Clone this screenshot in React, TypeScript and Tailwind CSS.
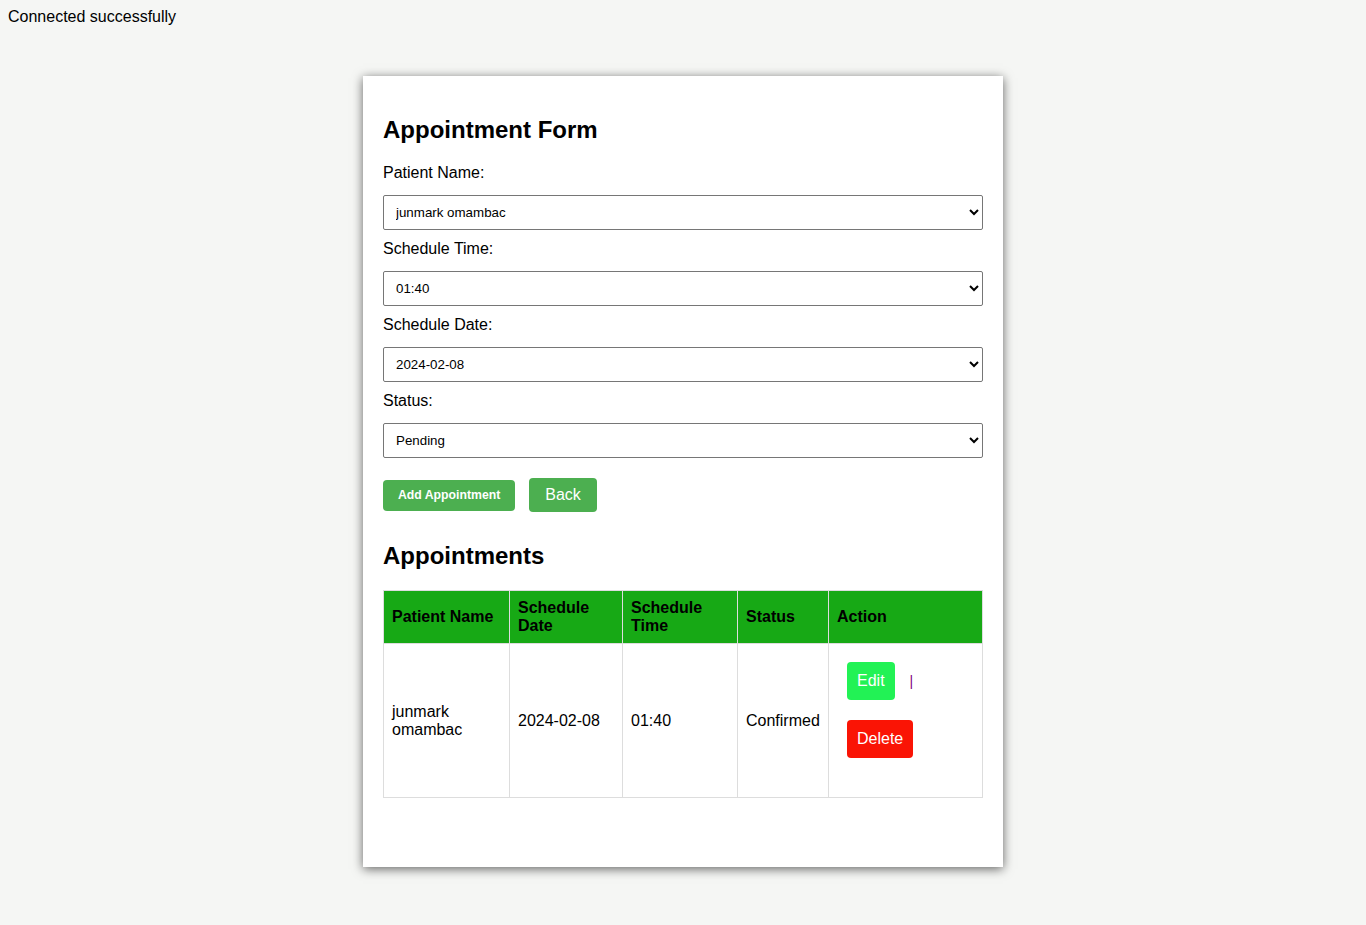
import React from "react"

const fields = [
  { label: "Patient Name:", value: "junmark omambac" },
  { label: "Schedule Time:", value: "01:40" },
  { label: "Schedule Date:", value: "2024-02-08" },
  { label: "Status:", value: "Pending" },
]

export default function App() {
  return (
    <div className="min-h-[925px] bg-[#f5f6f4] pt-[8px] font-['Liberation_Sans',Arial,sans-serif] text-black">
      <div className="pl-[8px] text-[16px] leading-[18px]">Connected successfully</div>

      <div className="mx-auto mt-[50px] w-[640px] bg-white px-[20px] pt-[20px] pb-[69px] shadow-[0_2px_10px_rgba(0,0,0,0.6)]">
        {/* form */}
        <h2 className="mt-[20px] mb-[20px] text-[24px] leading-[28px] font-bold">Appointment Form</h2>

        {fields.map((f) => (
          <div key={f.label}>
            <label className="block text-[16px] leading-[18px]">{f.label}</label>
            <select
              defaultValue={f.value}
              className="mt-[13px] mb-[10px] block h-[35px] w-full rounded-[2px] border border-[#767676] bg-white px-[8px] text-[13.33px] text-black [appearance:auto]"
            >
              <option>{f.value}</option>
            </select>
          </div>
        ))}

        <div className="mt-[20px] flex items-center">
          <button className="h-[31px] rounded-[4px] bg-[#4caf50] px-[15px] text-[12.25px] font-bold text-white">
            Add Appointment
          </button>
          <button className="ml-[14px] h-[34px] rounded-[4px] bg-[#4caf50] px-[16px] text-[16px] text-white">
            Back
          </button>
        </div>

        <h2 className="mt-[30px] mb-[20px] text-[24px] leading-[28px] font-bold">Appointments</h2>

        {/* table */}
        <table className="w-[600px] table-fixed border-collapse text-[16px] leading-[18px]">
          <colgroup>
            <col className="w-[126px]" />
            <col className="w-[113px]" />
            <col className="w-[115px]" />
            <col className="w-[91px]" />
            <col className="w-[154px]" />
          </colgroup>
          <thead>
            <tr className="h-[53px] bg-[#17a915]">
              <th className="border border-[#ddd] px-[8px] text-left align-middle font-bold">Patient Name</th>
              <th className="border border-[#ddd] px-[8px] text-left align-middle font-bold">Schedule Date</th>
              <th className="border border-[#ddd] px-[8px] text-left align-middle font-bold">Schedule Time</th>
              <th className="border border-[#ddd] px-[8px] text-left align-middle font-bold">Status</th>
              <th className="border border-[#ddd] px-[8px] text-left align-middle font-bold">Action</th>
            </tr>
          </thead>
          <tbody>
            <tr className="h-[154px]">
              <td className="border border-[#ddd] px-[8px] align-middle">junmark omambac</td>
              <td className="border border-[#ddd] px-[8px] align-middle">2024-02-08</td>
              <td className="border border-[#ddd] px-[8px] align-middle">01:40</td>
              <td className="border border-[#ddd] px-[8px] align-middle">Confirmed</td>
              <td className="border border-[#ddd] px-[8px] pt-[18px] align-top">
                <div className="flex items-center">
                  <button className="ml-[10px] h-[38px] rounded-[4px] bg-[#22f255] px-[10px] text-[16px] text-white">
                    Edit
                  </button>
                  <span className="ml-[15px] text-[14px] leading-[16px] text-[#800080]">|</span>
                </div>
                <div className="mt-[20px] flex">
                  <button className="ml-[10px] h-[38px] rounded-[4px] bg-[#fa1405] px-[10px] text-[16px] text-white">
                    Delete
                  </button>
                </div>
              </td>
            </tr>
          </tbody>
        </table>
      </div>
    </div>
  )
}
